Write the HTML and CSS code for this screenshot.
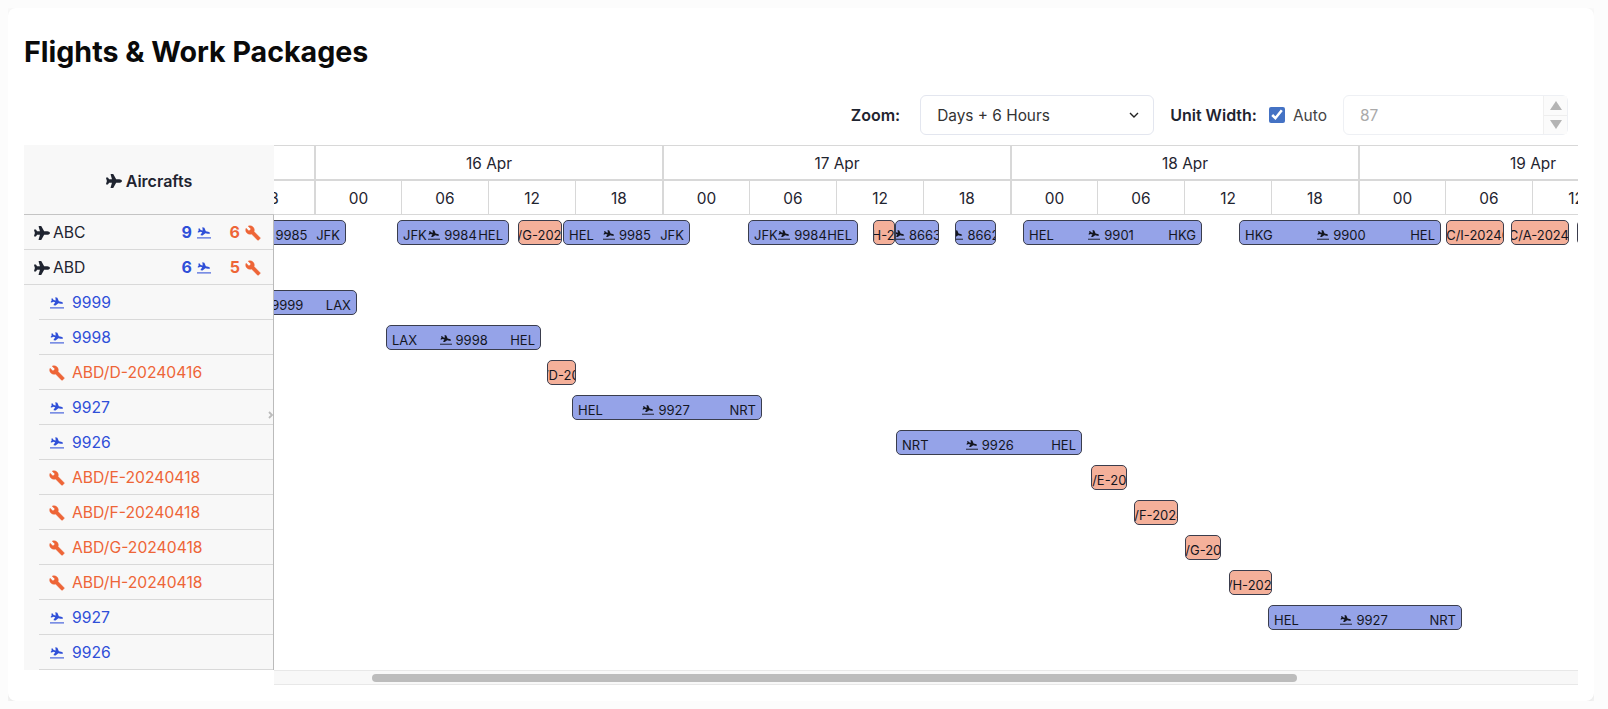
FILE: index.html
```html
<!DOCTYPE html>
<html>
  <head>
    <meta charset="utf-8">
    <title>Flights &amp; Work Packages</title>
    <link rel="stylesheet" href="styles.css">
  </head>
  <body>
    <svg class="defs" width="0" height="0">
      <symbol id="plane" viewBox="0 0 576 512"><path d="M480 192H365.71L260.61 8.06A16.014 16.014 0 0 0 246.71 0h-65.5c-10.63 0-18.3 10.17-15.38 20.39L214.86 192H112l-43.2-57.6c-3.02-4.03-7.77-6.4-12.8-6.4H16.01C5.6 128-2.04 137.78.49 147.88L32 256 .49 364.12C-2.04 374.22 5.6 384 16.01 384H56c5.04 0 9.78-2.37 12.8-6.4L112 320h102.86l-49.03 171.6c-2.92 10.22 4.75 20.4 15.38 20.4h65.5c5.74 0 11.04-3.08 13.89-8.06L365.71 320H480c35.35 0 96-28.65 96-64s-60.65-64-96-64z"/></symbol>
      <symbol id="land" viewBox="0 0 640 512">
        <rect x="0" y="456" width="640" height="48"/>
        <path transform="translate(320 200) rotate(14) scale(.98 .72) translate(-288 -256)" d="M480 192H365.71L260.61 8.06A16.014 16.014 0 0 0 246.71 0h-65.5c-10.63 0-18.3 10.17-15.38 20.39L214.86 192H112l-43.2-57.6c-3.02-4.03-7.77-6.4-12.8-6.4H16.01C5.6 128-2.04 137.78.49 147.88L32 256 .49 364.12C-2.04 374.22 5.6 384 16.01 384H56c5.04 0 9.78-2.37 12.8-6.4L112 320h102.86l-49.03 171.6c-2.92 10.22 4.75 20.4 15.38 20.4h65.5c5.74 0 11.04-3.08 13.89-8.06L365.71 320H480c35.35 0 96-28.65 96-64s-60.65-64-96-64z"/>
      </symbol>
      <symbol id="wrench" viewBox="0 0 24 24"><path d="M22.7 19l-9.1-9.1c.9-2.3.4-5-1.5-6.9-2-2-5-2.4-7.4-1.3L9 6 6 9 1.6 4.7C.4 7.1.9 10.1 2.9 12.1c1.9 1.9 4.6 2.4 6.9 1.5l9.1 9.1c.4.4 1 .4 1.4 0l2.3-2.3c.5-.4.5-1.1.1-1.4z"/></symbol>
    </svg>

    <div class="card">
      <h1 class="title">Flights &amp; Work Packages</h1>

      <div class="toolbar">
        <label class="tool-label" for="zoom">Zoom:</label>
        <div class="select-box">
          <select id="zoom" class="select">
            <option>Days + 6 Hours</option>
          </select>
          <svg class="chevron" viewBox="0 0 10 6"><path d="M1 1l4 4 4-4"/></svg>
        </div>
        <span class="tool-label unit-label">Unit Width:</span>
        <input class="auto-check" id="auto" type="checkbox" checked>
        <label class="auto-label" for="auto">Auto</label>
        <div class="number-box">
          <span class="number-value">87</span>
          <div class="spinner">
            <span class="spin spin-up"></span>
            <span class="spin spin-down"></span>
          </div>
        </div>
      </div>

      <div class="gantt">
        <div class="panel">
          <div class="panel-head"><svg class="ico"><use href="#plane"/></svg> Aircrafts</div>
          <div class="panel-rows">
            <div class="row group">
              <svg class="ico"><use href="#plane"/></svg><span class="name">ABC</span>
              <span class="count flights">9 <svg class="ico land"><use href="#land"/></svg></span>
              <span class="count works">6 <svg class="ico"><use href="#wrench"/></svg></span>
            </div>
            <div class="row group">
              <svg class="ico"><use href="#plane"/></svg><span class="name">ABD</span>
              <span class="count flights">6 <svg class="ico land"><use href="#land"/></svg></span>
              <span class="count works">5 <svg class="ico"><use href="#wrench"/></svg></span>
            </div>
            <div class="row sub flights"><svg class="ico land"><use href="#land"/></svg>9999</div>
            <div class="row sub flights"><svg class="ico land"><use href="#land"/></svg>9998</div>
            <div class="row sub works"><svg class="ico"><use href="#wrench"/></svg>ABD/D-20240416</div>
            <div class="row sub flights"><svg class="ico land"><use href="#land"/></svg>9927</div>
            <div class="row sub flights"><svg class="ico land"><use href="#land"/></svg>9926</div>
            <div class="row sub works"><svg class="ico"><use href="#wrench"/></svg>ABD/E-20240418</div>
            <div class="row sub works"><svg class="ico"><use href="#wrench"/></svg>ABD/F-20240418</div>
            <div class="row sub works"><svg class="ico"><use href="#wrench"/></svg>ABD/G-20240418</div>
            <div class="row sub works"><svg class="ico"><use href="#wrench"/></svg>ABD/H-20240418</div>
            <div class="row sub flights"><svg class="ico land"><use href="#land"/></svg>9927</div>
            <div class="row sub flights"><svg class="ico land"><use href="#land"/></svg>9926</div>
          </div>
          <svg class="collapse" viewBox="0 0 6 8"><path d="M1 1l3 3-3 3"/></svg>
        </div>

        <div class="timeline">
          <div class="view">
            <div class="days">
              <div class="day">15 Apr</div>
              <div class="day">16 Apr</div>
              <div class="day">17 Apr</div>
              <div class="day">18 Apr</div>
              <div class="day">19 Apr</div>
            </div>
            <div class="hours">
              <div class="hour">00</div><div class="hour">06</div><div class="hour">12</div><div class="hour">18</div>
              <div class="hour">00</div><div class="hour">06</div><div class="hour">12</div><div class="hour">18</div>
              <div class="hour">00</div><div class="hour">06</div><div class="hour">12</div><div class="hour">18</div>
              <div class="hour">00</div><div class="hour">06</div><div class="hour">12</div><div class="hour">18</div>
              <div class="hour">00</div><div class="hour">06</div><div class="hour">12</div><div class="hour">18</div>
            </div>

            <div class="bar-row">
              <div class="bar flight" style="left:-54px;width:126px"><span>HEL</span><span class="no"><svg class="ico"><use href="#land"/></svg>9985</span><span>JFK</span></div>
              <div class="bar flight" style="left:123px;width:112px"><span>JFK</span><span class="no"><svg class="ico"><use href="#land"/></svg>9984</span><span>HEL</span></div>
              <div class="bar work" style="left:244px;width:44px"><span>ABC/G-20240416</span></div>
              <div class="bar flight" style="left:289px;width:127px"><span>HEL</span><span class="no"><svg class="ico"><use href="#land"/></svg>9985</span><span>JFK</span></div>
              <div class="bar flight" style="left:474px;width:110px"><span>JFK</span><span class="no"><svg class="ico"><use href="#land"/></svg>9984</span><span>HEL</span></div>
              <div class="bar work tiny" style="left:599px;width:22px"><span>ABC/H-20240417</span></div>
              <div class="bar flight short" style="left:621px;width:44px"><span class="no"><svg class="ico"><use href="#land"/></svg>8663</span></div>
              <div class="bar flight short" style="left:681px;width:41px"><span class="no"><svg class="ico"><use href="#land"/></svg>8662</span></div>
              <div class="bar flight" style="left:749px;width:179px"><span>HEL</span><span class="no"><svg class="ico"><use href="#land"/></svg>9901</span><span>HKG</span></div>
              <div class="bar flight" style="left:965px;width:202px"><span>HKG</span><span class="no"><svg class="ico"><use href="#land"/></svg>9900</span><span>HEL</span></div>
              <div class="bar work" style="left:1172px;width:58px"><span>ABC/I-20240418</span></div>
              <div class="bar work" style="left:1237px;width:58px"><span>ABC/A-20240419</span></div>
              <div class="bar work" style="left:1303px;width:58px"><span>ABC/B-20240419</span></div>
            </div>
            <div class="bar-row"></div>
            <div class="bar-row">
              <div class="bar flight" style="left:-72px;width:155px"><span>HEL</span><span class="no"><svg class="ico"><use href="#land"/></svg>9999</span><span>LAX</span></div>
            </div>
            <div class="bar-row">
              <div class="bar flight" style="left:112px;width:155px"><span>LAX</span><span class="no"><svg class="ico"><use href="#land"/></svg>9998</span><span>HEL</span></div>
            </div>
            <div class="bar-row">
              <div class="bar work tiny" style="left:273px;width:29px"><span>ABD/D-20240416</span></div>
            </div>
            <div class="bar-row">
              <div class="bar flight" style="left:298px;width:190px"><span>HEL</span><span class="no"><svg class="ico"><use href="#land"/></svg>9927</span><span>NRT</span></div>
            </div>
            <div class="bar-row">
              <div class="bar flight" style="left:622px;width:186px"><span>NRT</span><span class="no"><svg class="ico"><use href="#land"/></svg>9926</span><span>HEL</span></div>
            </div>
            <div class="bar-row">
              <div class="bar work tiny" style="left:817px;width:36px"><span>ABD/E-20240418</span></div>
            </div>
            <div class="bar-row">
              <div class="bar work" style="left:860px;width:44px"><span>ABD/F-20240418</span></div>
            </div>
            <div class="bar-row">
              <div class="bar work tiny" style="left:911px;width:36px"><span>ABD/G-20240418</span></div>
            </div>
            <div class="bar-row">
              <div class="bar work" style="left:955px;width:43px"><span>ABD/H-20240418</span></div>
            </div>
            <div class="bar-row">
              <div class="bar flight" style="left:994px;width:194px"><span>HEL</span><span class="no"><svg class="ico"><use href="#land"/></svg>9927</span><span>NRT</span></div>
            </div>
            <div class="bar-row"></div>
          </div>
          <div class="hscroll"><div class="hscroll-thumb"></div></div>
        </div>
      </div>
    </div>
  </body>
</html>
```

FILE: styles.css
```css
* {
  box-sizing: border-box;
}

body {
  margin: 8px 14px 8px 8px;
  background-color: #fcfcfc;
  color: #1f2430;
  font-family: Inter, "Liberation Sans", sans-serif;
  font-size: 15px;
}

.defs {
  position: absolute;
}

.ico {
  width: 16px;
  height: 16px;
  fill: currentColor;
  flex: none;
}

.ico.land {
  width: 14px;
}

.card {
  background-color: #fff;
  border-radius: 8px;
  padding: 16px;
  box-shadow: 0 3px 10px rgba(0, 0, 0, 0.12);
}

.title {
  margin: 10px 0 25px;
  font-size: 28.6px;
  line-height: 36px;
  font-weight: 700;
  color: #0a0a0a;
}

/* toolbar */
.toolbar {
  display: flex;
  align-items: center;
  justify-content: flex-end;
  height: 40px;
  margin-bottom: 10px;
  padding-right: 10px;
}

.tool-label {
  font-weight: 600;
  font-size: 16px;
}

.select-box {
  position: relative;
  margin-left: 20px;
}

.select {
  display: block;
  width: 234px;
  height: 40px;
  padding: 0 16px;
  appearance: none;
  border: 1px solid #e3e6ef;
  border-radius: 6px;
  background-color: #fff;
  color: #333;
  font-family: inherit;
  font-size: 15.4px;
}

.chevron {
  position: absolute;
  top: 17px;
  right: 15px;
  width: 10px;
  height: 6px;
  fill: none;
  stroke: #222;
  stroke-width: 1.4;
}

.unit-label {
  margin-left: 16px;
}

.auto-check {
  width: 16px;
  height: 16px;
  margin: 0 0 0 12px;
  accent-color: #4472c4;
}

.auto-label {
  margin-left: 8px;
  color: #444;
  font-size: 15.5px;
}

.number-box {
  display: flex;
  align-items: center;
  justify-content: space-between;
  width: 225px;
  height: 40px;
  margin-left: 16px;
  padding-left: 16px;
  border: 1px solid #eef0f4;
  border-radius: 6px;
  color: #aaa;
  font-size: 15.5px;
}

.spinner {
  display: flex;
  flex-direction: column;
  width: 24px;
  height: 38px;
  border-left: 1px solid #f0f0f0;
  background-color: #fbfbfb;
}

.spin {
  flex: 1;
  display: flex;
  align-items: center;
  justify-content: center;
}

.spin-up {
  border-bottom: 1px solid #eee;
}

.spin-up::after,
.spin-down::after {
  content: "";
  border-left: 6px solid transparent;
  border-right: 6px solid transparent;
}

.spin-up::after {
  border-bottom: 9px solid #b4b4b4;
}

.spin-down::after {
  border-top: 9px solid #b4b4b4;
}

/* gantt */
.gantt {
  display: flex;
  align-items: flex-start;
}

.panel {
  position: relative;
  flex: none;
  width: 250px;
  background-color: #f8f8f8;
  font-size: 15.7px;
}

.panel-head {
  display: flex;
  align-items: center;
  justify-content: center;
  gap: 4px;
  height: 70px;
  padding-top: 2px;
  border-bottom: 1px solid #c4c4c4;
  font-weight: 600;
  font-size: 16px;
}

.panel-rows {
  border-right: 1px solid #bbb;
}

.row {
  display: flex;
  align-items: center;
  height: 35px;
  border-bottom: 1px solid #d9d9d9;
}

.row .ico {
  position: relative;
  top: 1px;
}

.group {
  padding: 0 12px 0 10px;
}

.name {
  flex: 1;
  margin-left: 3px;
}

.count {
  display: flex;
  align-items: center;
  gap: 5px;
  font-weight: 700;
  font-size: 16px;
}

.count.works {
  width: 30px;
  margin-left: 20px;
  justify-content: flex-end;
}

.flights {
  color: #2f4fd8;
}

.works {
  color: #ee6537;
}

.works .ico {
  stroke: currentColor;
  stroke-width: 0.6;
}

.sub {
  gap: 7px;
  margin-left: 15px;
  padding-left: 10px;
}

.sub .ico.land {
  margin-left: 1px;
  margin-right: 1px;
}

.collapse {
  position: absolute;
  top: 266px;
  right: 0;
  width: 6px;
  height: 8px;
  fill: none;
  stroke: #bbb;
  stroke-width: 1.8;
}

.timeline {
  flex: 1;
  min-width: 0;
}

.view {
  overflow: hidden;
}

.days,
.hours {
  display: flex;
  width: 1740px;
  height: 35px;
  margin-left: -307px;
  border-top: 1px solid #d8d8d8;
  border-bottom: 1px solid #d8d8d8;
  font-size: 15.4px;
}

.day {
  flex: none;
  width: 348px;
  display: flex;
  align-items: center;
  justify-content: center;
  padding-top: 1px;
  border-left: 1px solid #d8d8d8;
  border-right: 1px solid #d8d8d8;
}

.hour {
  flex: none;
  width: 87px;
  display: flex;
  align-items: center;
  justify-content: center;
  padding-top: 1px;
  border-right: 1px solid #d8d8d8;
}

.hour:nth-child(4n + 1) {
  border-left: 1px solid #d8d8d8;
}

.bar-row {
  position: relative;
  height: 35px;
}

.bar {
  position: absolute;
  top: 5px;
  height: 25px;
  display: flex;
  align-items: center;
  overflow: hidden;
  padding-top: 4px;
  border: 1px solid #3a3d4d;
  border-radius: 5px;
  color: #14161f;
  font-size: 13px;
  white-space: nowrap;
}

.flight {
  justify-content: space-between;
  padding-left: 5px;
  padding-right: 5px;
  background-color: #95a3e8;
}

.flight.short {
  justify-content: center;
  padding-left: 0;
  padding-right: 0;
}

.work {
  justify-content: center;
  padding-left: 10px;
  background-color: #f4b09a;
}

.work.tiny {
  padding-left: 20px;
}

.work span {
  flex: none;
}

.no {
  display: flex;
  flex: none;
  align-items: center;
  gap: 4px;
}

.no .ico {
  width: 12px;
  height: 12px;
}

.hscroll {
  height: 15px;
  padding-top: 3px;
  border-top: 1px solid #e8e8e8;
  border-bottom: 1px solid #e8e8e8;
  background-color: #f8f8f8;
}

.hscroll-thumb {
  width: 925px;
  height: 8px;
  margin-left: 98px;
  border-radius: 4px;
  background-color: #bcbcbc;
}
```
